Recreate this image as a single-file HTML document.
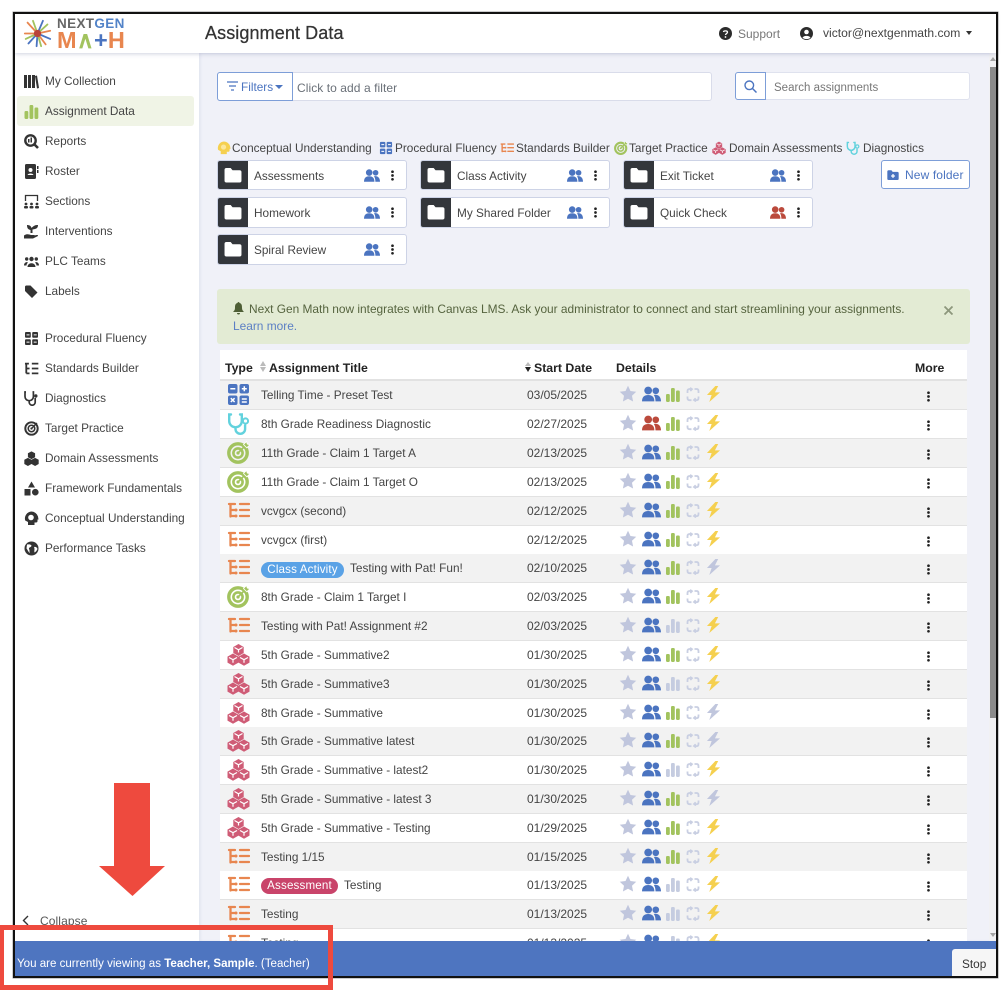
<!DOCTYPE html>
<html><head><meta charset="utf-8"><title>Assignment Data</title>
<style>
*{box-sizing:border-box}
html,body{margin:0;padding:0;width:1008px;height:992px;overflow:hidden;background:#fff;font-family:"Liberation Sans",sans-serif;color:#333}
.a{position:absolute;white-space:nowrap}
#frame{position:absolute;left:13px;top:12px;width:985px;height:966px;border:2px solid #111;border-width:2px 2.5px 2.5px 2px;z-index:20;pointer-events:none;box-shadow:0 0 0 .5px #999}
#main{position:absolute;left:199px;top:53px;width:790px;height:888px;background:#f0f1f8;overflow:hidden;box-shadow:inset 2px 0 2px #e4e6f1}
#hdr{position:absolute;left:15px;top:14px;width:981px;height:39px;background:#fff;box-shadow:0 1px 4px rgba(120,130,170,.35);z-index:2}
.n{position:absolute;left:45px;font-size:11.8px;line-height:16px;color:#444;white-space:nowrap}
.ni{position:absolute;left:24px;width:15px;height:15px;fill:#333}
.card{position:absolute;width:190px;height:31px;background:#fff;border:1px solid #cdd3e6;border-radius:3px;overflow:hidden;font-size:11.8px;color:#444}
.card b{position:absolute;left:0;top:0;width:30px;height:31px;background:#33363b}
.card span{position:absolute;left:36px;top:7px;line-height:16px;white-space:nowrap}
.card svg.f{position:absolute;left:6px;top:6px;width:18px;height:16px;fill:#fff}
.card svg.p{position:absolute;left:146px;top:8px;width:16px;height:13px;fill:#4b74c0}
.card svg.k{position:absolute;left:172px;top:9px;width:5px;height:11px;fill:#222}
.lg{position:absolute;top:140px;font-size:11.8px;line-height:16px;color:#444;white-space:nowrap}
.lgi{position:absolute;top:141px;width:14px;height:14px}
.r{position:absolute;left:220px;width:747px;height:29px;background:#fff;border-bottom:1px solid #e2e2e2;font-size:11.8px;color:#444}
.r.o{background:#f2f2f2}
.r>svg{position:absolute}
.r .t{position:absolute;left:41px;top:6px;line-height:16px;white-space:nowrap}
.r .d{position:absolute;left:307px;top:6px;line-height:16px;font-size:12px}
.ty{left:7px;top:2px;width:23px;height:23px}
.s1{left:399px;top:4px;width:18px;height:18px;fill:#c0c6dd}
.s2{left:422px;top:5px;width:19px;height:16px;fill:#4b74c0}
.s3{left:446px;top:6px;width:14px;height:15px;fill:#a2c35e}
.g3{fill:#c5cce0}
.s4{left:466px;top:6px;width:14px;height:15px;fill:none;stroke:#c9cfe2;stroke-width:1.8}
.s5{left:486px;top:5px;width:15px;height:16px;fill:#f5d04f}
.g5{fill:#c0c6dd}
.s6{left:706px;top:10px;width:5px;height:11px;fill:#222}
.pill{position:absolute;left:41px;top:8px;height:16px;border-radius:8px;color:#fff;font-size:11.6px;line-height:16px;text-align:center;letter-spacing:.15px}
.th{position:absolute;top:360px;font-size:12.3px;font-weight:bold;line-height:16px;color:#222;white-space:nowrap}
</style></head>
<body>
<svg width="0" height="0" style="position:absolute">
<defs>
<symbol id="pe" viewBox="0 0 20 16"><circle cx="6.500" cy="4.300" r="4.100"/><path d="M0 15.800C0 11 2.500 9 6.500 9s6.500 2 6.500 6.800z"/><circle cx="14.500" cy="4.600" r="3.500"/><path d="M12.500 9c4.500-1 7.500 1.800 7.500 6.800h-5.800c0-3-.5-5-1.700-6.800z"/></symbol>
<symbol id="st" viewBox="0 0 24 24"><path d="M12 1l3.300 7 7.700 1-5.700 5.300 1.500 7.700L12 18.300 5.200 22l1.500-7.700L1 9l7.700-1z"/></symbol>
<symbol id="ba" viewBox="0 0 14 15"><rect x="0" y="7" width="3.800" height="8" rx="1.200"/><rect x="5" y="1" width="3.800" height="14" rx="1.200"/><rect x="10" y="3.500" width="3.800" height="11.500" rx="1.200"/></symbol>
<symbol id="sy" viewBox="0 0 14 15"><path d="M1.500 6V4Q1.500 2 3.500 2H5.500M4 .8L6 2.200 4.300 4M8.500 2H10.500Q12.500 2 12.500 4V6M12.500 9.500V11Q12.500 13.200 10.500 13.200H8.500M10 14.400L8 13 9.700 11.200M5.500 13.200H3.500Q1.500 13.200 1.500 11V9.500"/></symbol>
<symbol id="bo" viewBox="0 0 16 17"><path d="M10 0L1 9.500h5L3.500 17 15 6.800H9.500L13 0z"/></symbol>
<symbol id="ke" viewBox="0 0 5 13"><circle cx="2.500" cy="2" r="1.600"/><circle cx="2.500" cy="6.500" r="1.600"/><circle cx="2.500" cy="11" r="1.600"/></symbol>
<symbol id="fo" viewBox="0 0 19 17"><path d="M2.500 1H7l2 2.500h7.500A2 2 0 0 1 18.500 5.500v9a2 2 0 0 1-2 2h-14a2 2 0 0 1-2-2V3a2 2 0 0 1 2-2z"/></symbol>
<symbol id="ca" viewBox="0 0 23 23"><rect x="1" y="1" width="9.500" height="9.500" rx="2" fill="#4b74c0"/><rect x="12.500" y="1" width="9.500" height="9.500" rx="2" fill="#4b74c0"/><rect x="1" y="12.500" width="9.500" height="9.500" rx="2" fill="#4b74c0"/><rect x="12.500" y="12.500" width="9.500" height="9.500" rx="2" fill="#4b74c0"/><path d="M3.300 5.700h5M14.800 5.700h5M17.300 3.200v5M3.800 15.200l3.800 3.800M7.600 15.200l-3.800 3.800M14.800 16h5M14.800 19h5" stroke="#fff" stroke-width="1.500" fill="none"/></symbol>
<symbol id="di" viewBox="0 0 23 23"><path d="M4 2.500H2.200v6.500a6.300 6.300 0 0 0 12.600 0V2.500H13" fill="none" stroke="#62d2dd" stroke-width="2.400" stroke-linecap="round"/><path d="M8.500 15.500v1.500a4.800 4.800 0 0 0 9.600 0V12.500" fill="none" stroke="#62d2dd" stroke-width="2.400"/><circle cx="18.500" cy="9" r="2.600" fill="none" stroke="#62d2dd" stroke-width="2"/></symbol>
<symbol id="ta" viewBox="0 0 23 23"><circle cx="11" cy="12" r="9.200" fill="none" stroke="#a2c35e" stroke-width="3.400"/><circle cx="11" cy="12" r="4.600" fill="none" stroke="#a2c35e" stroke-width="2.600"/><circle cx="11" cy="12" r="1.600" fill="#a2c35e"/><path d="M11 12L19 4" stroke="#a2c35e" stroke-width="1.800"/><path d="M16.500 3.500l3-3 .8 2.500 2.500.8-3 3z" fill="#a2c35e" stroke="#fff" stroke-width=".8"/></symbol>
<symbol id="sb" viewBox="0 0 23 23"><path d="M3.500 5v12.500M2 5h6M3.500 11h5.500M3.500 17h5.500M13 5h9M13 11h9M13 17h9" fill="none" stroke="#e8864f" stroke-width="2.300" stroke-linecap="round"/><circle cx="9" cy="11" r="1.500" fill="#e8864f"/><circle cx="9" cy="17" r="1.500" fill="#e8864f"/></symbol>
<symbol id="cu" viewBox="0 0 23 23"><path d="M11.500 1l5.200 3v6L11.500 13l-5.200-3V4z" fill="#cf5c76"/><path d="M6 10.500l5.500 3.100v6L6 22.700.5 19.600v-6z" fill="#cf5c76"/><path d="M17 10.500l5.500 3.100v6L17 22.700l-5.500-3.100v-6z" fill="#cf5c76"/><path d="M7.500 4.500L11.500 6.800 15.500 4.500M11.500 6.800V9.500M2 14.500L6 16.700 10 14.500M6 16.700v3M13 14.500L17 16.700 21 14.500M17 16.700v3" fill="none" stroke="#fff" stroke-width="1.200"/></symbol>
</defs>
</svg>

<div id="main"></div>

<div id="hdr"></div>
<div class="a" style="left:205px;top:22px;font-size:18px;line-height:22px;color:#333;z-index:3;-webkit-text-stroke:.25px #333;letter-spacing:.1px">Assignment Data</div>
<svg class="a" style="left:719px;top:27px;z-index:3" width="13" height="13" viewBox="0 0 13 13"><circle cx="6.500" cy="6.500" r="6.500" fill="#2b2b2b"/><path d="M4.500 5C4.700 3.500 8.500 3.500 8.500 5.300c0 1.300-2 1.200-2 2.700" fill="none" stroke="#fff" stroke-width="1.300"/><circle cx="6.500" cy="10" r=".9" fill="#fff"/></svg>
<div class="a" style="left:738px;top:26px;font-size:12px;line-height:16px;color:#777;z-index:3">Support</div>
<svg class="a" style="left:800px;top:27px;z-index:3" width="13" height="13" viewBox="0 0 13 13"><circle cx="6.500" cy="6.500" r="6.500" fill="#2b2b2b"/><circle cx="6.500" cy="5" r="2.300" fill="#fff"/><path d="M2.500 10.800c1-2.600 7-2.600 8 0-2 1.800-6 1.800-8 0z" fill="#fff"/></svg>
<div class="a" style="left:823px;top:25px;font-size:12.100px;line-height:16px;color:#444;z-index:3">victor@nextgenmath.com</div>
<div class="a" style="left:966px;top:31px;width:0;height:0;border:3.500px solid transparent;border-top:4px solid #333;border-bottom:0;z-index:3"></div>

<!-- logo -->
<svg class="a" style="left:23px;top:19px;z-index:3" width="29" height="29" viewBox="0 0 32 32" fill="none" stroke-width="2" stroke-linecap="round"><path d="M16 16L5 4M16 16L2 16" stroke="#e8864f"/><path d="M16 16L11 2M16 16L27 6" stroke="#a2c35e"/><path d="M16 16L30 13M16 16L25 28" stroke="#e8864f"/><path d="M16 16L15 30M16 16L6 27" stroke="#4b74c0"/><path d="M16 16L22 2M16 16L30 22" stroke="#4b74c0"/><path d="M16 16L3 22M16 16L20 30" stroke="#a2c35e"/><circle cx="16" cy="16" r="4" fill="#b9433a" stroke="none"/></svg>
<div class="a" style="left:57px;top:16px;font-size:13.500px;line-height:16px;font-weight:bold;letter-spacing:.35px;color:#666;z-index:3">NEXT<span style="color:#5283c8">GEN</span></div>
<div class="a" style="left:57px;top:29px;font-size:23.500px;line-height:23px;font-weight:bold;color:#e8864f;letter-spacing:.1px;z-index:3">M<span style="color:#a2c35e">∧</span><span style="color:#4b74c0">+</span>H</div>

<div class="a" style="left:17px;top:96px;width:177px;height:30px;background:#f0f4e6;border-radius:3px"></div>
<svg class="ni" style="top:74px" viewBox="0 0 15 15"><rect x="0" y="1" width="3" height="13"/><rect x="4" y="1" width="3" height="13"/><rect x="8" y="1" width="3" height="13"/><path d="M11 2l2-.5 2 12.500-2 .5z"/></svg>
<div class="n" style="top:73px">My Collection</div>
<svg class="ni" style="top:104px;fill:#a2c35e" viewBox="0 0 14 15"><use href="#ba"/></svg>
<div class="n" style="top:103px">Assignment Data</div>
<svg class="ni" style="top:134px" viewBox="0 0 15 15"><circle cx="6.500" cy="6.500" r="5.200" fill="none" stroke="#333" stroke-width="2.400"/><path d="M10 10l4 4" stroke="#333" stroke-width="2.600"/><rect x="4" y="5" width="1.500" height="3.500"/><rect x="6.500" y="3.500" width="1.500" height="5"/></svg>
<div class="n" style="top:133px">Reports</div>
<svg class="ni" style="top:164px" viewBox="0 0 15 15"><rect x="1" y="0" width="11" height="15" rx="1.500"/><rect x="13" y="2" width="1.500" height="3"/><rect x="13" y="6" width="1.500" height="3"/><circle cx="6.500" cy="6" r="2" fill="#fff"/><path d="M3.500 11c.5-2 5.500-2 6 0z" fill="#fff"/></svg>
<div class="n" style="top:163px">Roster</div>
<svg class="ni" style="top:194px" viewBox="0 0 15 15"><path d="M1.500 7V1.500h12V7" fill="none" stroke="#333" stroke-width="1.300"/><circle cx="2" cy="10" r="1.400"/><circle cx="7.500" cy="10" r="1.400"/><circle cx="13" cy="10" r="1.400"/><rect x="0" y="12" width="4" height="2.500" rx="1"/><rect x="5.500" y="12" width="4" height="2.500" rx="1"/><rect x="11" y="12" width="4" height="2.500" rx="1"/></svg>
<div class="n" style="top:193px">Sections</div>
<svg class="ni" style="top:224px" viewBox="0 0 15 15"><path d="M0 11.500c3-2 5-1 7-.5h3c1 0 .8 1.200 0 1.200H7.500l5-1.200c1.500-.3 2 .8 1 1.300L9 14.500H0zM3 1c2.500 0 4 1 4.500 3C10 1.500 11 1 14 1c0 3-1.500 4-5.500 4.500V9h-2V6C4 5.500 3 4 3 1z"/></svg>
<div class="n" style="top:223px">Interventions</div>
<svg class="ni" style="top:254px" viewBox="0 0 15 15"><circle cx="7.500" cy="5" r="2.200"/><circle cx="2.700" cy="5" r="1.700"/><circle cx="12.300" cy="5" r="1.700"/><path d="M3.500 13c0-5 8-5 8 0zM0 11.500c0-3 2.500-4 4-3-1 1-1.500 2-1.500 3zM15 11.500c0-3-2.500-4-4-3 1 1 1.500 2 1.500 3z"/></svg>
<div class="n" style="top:253px">PLC Teams</div>
<svg class="ni" style="top:284px" viewBox="0 0 15 15"><path d="M1 2.500V7l7 7 5.500-5.500-7-7H2.500A1.500 1.500 0 0 0 1 2.500z"/></svg>
<div class="n" style="top:283px">Labels</div>
<svg class="ni" style="top:331px" viewBox="0 0 15 15"><rect x="1" y="1" width="5.800" height="5.800" rx="1"/><rect x="8.200" y="1" width="5.800" height="5.800" rx="1"/><rect x="1" y="8.200" width="5.800" height="5.800" rx="1"/><rect x="8.200" y="8.200" width="5.800" height="5.800" rx="1"/><path d="M2.500 3.900h3M9.700 3.900h3M2.500 11.100h3M9.700 11.100h3" stroke="#fff"/></svg>
<div class="n" style="top:330px">Procedural Fluency</div>
<svg class="ni" style="top:361px" viewBox="0 0 23 23"><path d="M3.500 4v15M1.500 4h6M3.500 11.500h5M3.500 19h5M12 4h10M12 11.500h10M12 19h10" fill="none" stroke="#333" stroke-width="2.800"/></svg>
<div class="n" style="top:360px">Standards Builder</div>
<svg class="ni" style="top:391px" viewBox="0 0 15 15"><path d="M2 1H1v4.500a4.200 4.200 0 0 0 8.400 0V1H8.500M5.200 10v1.200a3 3 0 0 0 6 0V7" fill="none" stroke="#333" stroke-width="1.700"/><circle cx="11.800" cy="5" r="1.700"/></svg>
<div class="n" style="top:390px">Diagnostics</div>
<svg class="ni" style="top:421px" viewBox="0 0 23 23"><circle cx="11.500" cy="11.500" r="9.500" fill="none" stroke="#333" stroke-width="3"/><circle cx="11.500" cy="11.500" r="5" fill="none" stroke="#333" stroke-width="2.400"/><circle cx="11.500" cy="11.500" r="1.800"/><path d="M11.500 11.500L20 3" stroke="#333" stroke-width="2"/></svg>
<div class="n" style="top:420px">Target Practice</div>
<svg class="ni" style="top:451px;fill:#333" viewBox="0 0 23 23"><path d="M11.500 .5l5.500 3v6l-5.500 3-5.500-3v-6zM6 10.500l5.500 3v6.500l-5.500 3-5.500-3v-6.500zM17 10.500l5.500 3v6.500l-5.500 3-5.500-3v-6.500z"/></svg>
<div class="n" style="top:450px">Domain Assessments</div>
<svg class="ni" style="top:481px" viewBox="0 0 15 15"><path d="M7.500 .5L11 6.500H4z"/><rect x=".5" y="8" width="6" height="6.500"/><circle cx="11.300" cy="11.200" r="3.300"/></svg>
<div class="n" style="top:480px">Framework Fundamentals</div>
<svg class="ni" style="top:511px" viewBox="0 0 15 15"><path d="M7.500 .5A7 7 0 0 0 1.200 9.500L4 11v3h6.500v-2.500h1.500a1.500 1.500 0 0 0 1.500-1.500V8.500h1L14 5.500A7 7 0 0 0 7.500 .5z"/><circle cx="7" cy="6.500" r="2.800" fill="#fff"/></svg>
<div class="n" style="top:510px">Conceptual Understanding</div>
<svg class="ni" style="top:541px" viewBox="0 0 15 15"><circle cx="7.500" cy="7.500" r="7"/><path d="M3 3.500c2 0 3-.5 4.500 1 0 2-3 1.500-2.500 3.500 1 1.500 0 2.500 1 4-2-1-2-3-3.500-4.500zM10 6c2-.5 3 .5 3.500 2-1 2-2 3-3 3.500-.5-2 .5-3-.5-5.500z" fill="#fff"/></svg>
<div class="n" style="top:540px">Performance Tasks</div>

<!-- filter bar -->
<div class="a" style="left:217px;top:72px;width:495px;height:29px;background:#fff;border:1px solid #d9dcea;border-radius:3px"></div>
<div class="a" style="left:217px;top:72px;width:76px;height:29px;background:#fff;border:1px solid #7d9ed8;border-radius:3px 0 0 3px"></div>
<svg class="a" style="left:227px;top:81px" width="11" height="10" viewBox="0 0 11 10"><path d="M0 1h11M2 5h7M4 9h3" stroke="#4b74c0" stroke-width="1.300"/></svg>
<div class="a" style="left:241px;top:79px;font-size:11.800px;line-height:16px;color:#4b74c0">Filters</div>
<div class="a" style="left:275px;top:85px;width:0;height:0;border:4px solid transparent;border-top:4.500px solid #4b74c0;border-bottom:0"></div>
<div class="a" style="left:297px;top:80px;font-size:12px;line-height:16px;color:#6a7078;letter-spacing:.07px">Click to add a filter</div>

<div class="a" style="left:735px;top:72px;width:235px;height:28px;background:#fff;border:1px solid #dfe2ee;border-radius:3px"></div>
<div class="a" style="left:735px;top:72px;width:31px;height:28px;background:#fff;border:1px solid #7d9ed8;border-radius:3px 0 0 3px"></div>
<svg class="a" style="left:744px;top:80px" width="13" height="13" viewBox="0 0 13 13"><circle cx="5.300" cy="5.300" r="4.300" fill="none" stroke="#4b74c0" stroke-width="1.400"/><path d="M8.500 8.500l4 4" stroke="#4b74c0" stroke-width="1.500"/></svg>
<div class="a" style="left:774px;top:80px;font-size:11.500px;line-height:16px;color:#777">Search assignments</div>

<!-- legend -->
<svg class="lgi" style="left:217px" viewBox="0 0 15 15"><path d="M7.500 .5A7 7 0 0 0 1.200 9.500L4 11v3h6.500v-2.500h1.500a1.500 1.500 0 0 0 1.500-1.500V8.500h1L14 5.500A7 7 0 0 0 7.500 .5z" fill="#f5d04f"/><circle cx="7" cy="6.500" r="2.800" fill="#fbe79c"/></svg>
<div class="lg" style="left:232px">Conceptual Understanding</div>
<svg class="lgi" style="left:379px" viewBox="0 0 15 15" fill="#4b74c0"><rect x="1" y="1" width="5.800" height="5.800" rx="1"/><rect x="8.200" y="1" width="5.800" height="5.800" rx="1"/><rect x="1" y="8.200" width="5.800" height="5.800" rx="1"/><rect x="8.200" y="8.200" width="5.800" height="5.800" rx="1"/><path d="M2.500 3.900h3M9.700 3.900h3M2.500 11.100h3M9.700 11.100h3" stroke="#fff"/></svg>
<div class="lg" style="left:395px">Procedural Fluency</div>
<svg class="lgi" style="left:500px"><use href="#sb"/></svg>
<div class="lg" style="left:516px">Standards Builder</div>
<svg class="lgi" style="left:614px"><use href="#ta"/></svg>
<div class="lg" style="left:629px">Target Practice</div>
<svg class="lgi" style="left:712px"><use href="#cu"/></svg>
<div class="lg" style="left:729px">Domain Assessments</div>
<svg class="lgi" style="left:846px"><use href="#di"/></svg>
<div class="lg" style="left:863px">Diagnostics</div>

<!-- folders -->
<div class="card" style="left:217px;top:160px;height:30px"><b></b><svg class="f"><use href="#fo"/></svg><span>Assessments</span><svg class="p"><use href="#pe"/></svg><svg class="k"><use href="#ke"/></svg></div>
<div class="card" style="left:420px;top:160px;height:30px"><b></b><svg class="f"><use href="#fo"/></svg><span>Class Activity</span><svg class="p"><use href="#pe"/></svg><svg class="k"><use href="#ke"/></svg></div>
<div class="card" style="left:623px;top:160px;height:30px"><b></b><svg class="f"><use href="#fo"/></svg><span>Exit Ticket</span><svg class="p"><use href="#pe"/></svg><svg class="k"><use href="#ke"/></svg></div>
<div class="card" style="left:217px;top:197px"><b></b><svg class="f"><use href="#fo"/></svg><span>Homework</span><svg class="p"><use href="#pe"/></svg><svg class="k"><use href="#ke"/></svg></div>
<div class="card" style="left:420px;top:197px"><b></b><svg class="f"><use href="#fo"/></svg><span>My Shared Folder</span><svg class="p"><use href="#pe"/></svg><svg class="k"><use href="#ke"/></svg></div>
<div class="card" style="left:623px;top:197px"><b></b><svg class="f"><use href="#fo"/></svg><span>Quick Check</span><svg class="p" style="fill:#bb4a3c"><use href="#pe"/></svg><svg class="k"><use href="#ke"/></svg></div>
<div class="card" style="left:217px;top:234px"><b></b><svg class="f"><use href="#fo"/></svg><span>Spiral Review</span><svg class="p"><use href="#pe"/></svg><svg class="k"><use href="#ke"/></svg></div>

<div class="a" style="left:881px;top:160px;width:89px;height:29px;background:#fff;border:1px solid #7d9ed8;border-radius:3px"></div>
<svg class="a" style="left:887px;top:169px" width="12" height="12" viewBox="0 0 19 17"><path fill="#4b74c0" d="M2.500 1H7l2 2.500h7.500A2 2 0 0 1 18.500 5.500v9a2 2 0 0 1-2 2h-14a2 2 0 0 1-2-2V3a2 2 0 0 1 2-2z"/><path d="M9.500 7v6M6.500 10h6" stroke="#fff" stroke-width="2"/></svg>
<div class="a" style="left:905px;top:167px;font-size:12px;line-height:16px;color:#4b74c0;letter-spacing:.12px">New folder</div>

<!-- alert -->
<div class="a" style="left:217px;top:289px;width:753px;height:55px;background:#e3ebd4;border-radius:3px"></div>
<svg class="a" style="left:233px;top:302px" width="11" height="13" viewBox="0 0 11 13"><path fill="#4e5e35" d="M5.500 0a1 1 0 0 1 1 1C9 1.500 9 4 9 6c0 2 1 3 2 4H0c1-1 2-2 2-4 0-2 0-4.500 2.500-5a1 1 0 0 1 1-1zM4 11h3a1.500 1.500 0 0 1-3 0z"/></svg>
<div class="a" style="left:249px;top:301px;font-size:11.900px;line-height:16px;color:#55633e">Next Gen Math now integrates with Canvas LMS. Ask your administrator to connect and start streamlining your assignments.</div>
<div class="a" style="left:233px;top:318px;font-size:11.900px;line-height:16px;color:#5b7fc4">Learn more.</div>
<svg class="a" style="left:944px;top:306px" width="9" height="9" viewBox="0 0 9 9"><path d="M.5.500l8 8M8.500.500l-8 8" stroke="#8d977c" stroke-width="1.800"/></svg>

<!-- table head -->
<div class="a" style="left:220px;top:350px;width:747px;height:31px;background:#fff;border-bottom:2px solid #e2e2e2"></div>
<div class="th" style="left:225px">Type</div>
<div class="a" style="left:260px;top:361px;width:0;height:0;border:3.500px solid transparent;border-bottom:5px solid #bbb;border-top:0"></div>
<div class="a" style="left:260px;top:367px;width:0;height:0;border:3.500px solid transparent;border-top:5px solid #bbb;border-bottom:0"></div>
<div class="th" style="left:269px">Assignment Title</div>
<div class="a" style="left:525px;top:362px;width:0;height:0;border:3.500px solid transparent;border-bottom:4px solid #bbb;border-top:0"></div>
<div class="a" style="left:525px;top:367px;width:0;height:0;border:3.500px solid transparent;border-top:5px solid #222;border-bottom:0"></div>
<div class="th" style="left:534px">Start Date</div>
<div class="th" style="left:616px">Details</div>
<div class="th" style="left:915px">More</div>

<!-- rows -->
<div class="r o" style="top:381px"><svg class="ty"><use href="#ca"/></svg><div class="t">Telling Time - Preset Test</div><div class="d">03/05/2025</div><svg class="s1"><use href="#st"/></svg><svg class="s2"><use href="#pe"/></svg><svg class="s3"><use href="#ba"/></svg><svg class="s4"><use href="#sy"/></svg><svg class="s5"><use href="#bo"/></svg><svg class="s6"><use href="#ke"/></svg></div>
<div class="r" style="top:410px"><svg class="ty"><use href="#di"/></svg><div class="t">8th Grade Readiness Diagnostic</div><div class="d">02/27/2025</div><svg class="s1"><use href="#st"/></svg><svg class="s2" style="fill:#bb4a3c"><use href="#pe"/></svg><svg class="s3"><use href="#ba"/></svg><svg class="s4"><use href="#sy"/></svg><svg class="s5"><use href="#bo"/></svg><svg class="s6"><use href="#ke"/></svg></div>
<div class="r o" style="top:439px"><svg class="ty"><use href="#ta"/></svg><div class="t">11th Grade - Claim 1 Target A</div><div class="d">02/13/2025</div><svg class="s1"><use href="#st"/></svg><svg class="s2"><use href="#pe"/></svg><svg class="s3"><use href="#ba"/></svg><svg class="s4"><use href="#sy"/></svg><svg class="s5"><use href="#bo"/></svg><svg class="s6"><use href="#ke"/></svg></div>
<div class="r" style="top:468px"><svg class="ty"><use href="#ta"/></svg><div class="t">11th Grade - Claim 1 Target O</div><div class="d">02/13/2025</div><svg class="s1"><use href="#st"/></svg><svg class="s2"><use href="#pe"/></svg><svg class="s3"><use href="#ba"/></svg><svg class="s4"><use href="#sy"/></svg><svg class="s5"><use href="#bo"/></svg><svg class="s6"><use href="#ke"/></svg></div>
<div class="r o" style="top:497px"><svg class="ty"><use href="#sb"/></svg><div class="t">vcvgcx (second)</div><div class="d">02/12/2025</div><svg class="s1"><use href="#st"/></svg><svg class="s2"><use href="#pe"/></svg><svg class="s3"><use href="#ba"/></svg><svg class="s4"><use href="#sy"/></svg><svg class="s5"><use href="#bo"/></svg><svg class="s6"><use href="#ke"/></svg></div>
<div class="r" style="top:526px"><svg class="ty"><use href="#sb"/></svg><div class="t">vcvgcx (first)</div><div class="d">02/12/2025</div><svg class="s1"><use href="#st"/></svg><svg class="s2"><use href="#pe"/></svg><svg class="s3"><use href="#ba"/></svg><svg class="s4"><use href="#sy"/></svg><svg class="s5"><use href="#bo"/></svg><svg class="s6"><use href="#ke"/></svg></div>
<div class="r o" style="top:554px"><svg class="ty"><use href="#sb"/></svg><div class="pill" style="width:83px;background:#5aa2e6">Class Activity</div><div class="t" style="left:130px">Testing with Pat! Fun!</div><div class="d">02/10/2025</div><svg class="s1"><use href="#st"/></svg><svg class="s2"><use href="#pe"/></svg><svg class="s3"><use href="#ba"/></svg><svg class="s4"><use href="#sy"/></svg><svg class="s5 g5"><use href="#bo"/></svg><svg class="s6"><use href="#ke"/></svg></div>
<div class="r" style="top:583px"><svg class="ty"><use href="#ta"/></svg><div class="t">8th Grade - Claim 1 Target I</div><div class="d">02/03/2025</div><svg class="s1"><use href="#st"/></svg><svg class="s2"><use href="#pe"/></svg><svg class="s3"><use href="#ba"/></svg><svg class="s4"><use href="#sy"/></svg><svg class="s5"><use href="#bo"/></svg><svg class="s6"><use href="#ke"/></svg></div>
<div class="r o" style="top:612px"><svg class="ty"><use href="#sb"/></svg><div class="t">Testing with Pat! Assignment #2</div><div class="d">02/03/2025</div><svg class="s1"><use href="#st"/></svg><svg class="s2"><use href="#pe"/></svg><svg class="s3 g3"><use href="#ba"/></svg><svg class="s4"><use href="#sy"/></svg><svg class="s5"><use href="#bo"/></svg><svg class="s6"><use href="#ke"/></svg></div>
<div class="r" style="top:641px"><svg class="ty"><use href="#cu"/></svg><div class="t">5th Grade - Summative2</div><div class="d">01/30/2025</div><svg class="s1"><use href="#st"/></svg><svg class="s2"><use href="#pe"/></svg><svg class="s3"><use href="#ba"/></svg><svg class="s4"><use href="#sy"/></svg><svg class="s5"><use href="#bo"/></svg><svg class="s6"><use href="#ke"/></svg></div>
<div class="r o" style="top:670px"><svg class="ty"><use href="#cu"/></svg><div class="t">5th Grade - Summative3</div><div class="d">01/30/2025</div><svg class="s1"><use href="#st"/></svg><svg class="s2"><use href="#pe"/></svg><svg class="s3 g3"><use href="#ba"/></svg><svg class="s4"><use href="#sy"/></svg><svg class="s5"><use href="#bo"/></svg><svg class="s6"><use href="#ke"/></svg></div>
<div class="r" style="top:699px"><svg class="ty"><use href="#cu"/></svg><div class="t">8th Grade - Summative</div><div class="d">01/30/2025</div><svg class="s1"><use href="#st"/></svg><svg class="s2"><use href="#pe"/></svg><svg class="s3"><use href="#ba"/></svg><svg class="s4"><use href="#sy"/></svg><svg class="s5 g5"><use href="#bo"/></svg><svg class="s6"><use href="#ke"/></svg></div>
<div class="r o" style="top:727px"><svg class="ty"><use href="#cu"/></svg><div class="t">5th Grade - Summative latest</div><div class="d">01/30/2025</div><svg class="s1"><use href="#st"/></svg><svg class="s2"><use href="#pe"/></svg><svg class="s3"><use href="#ba"/></svg><svg class="s4"><use href="#sy"/></svg><svg class="s5 g5"><use href="#bo"/></svg><svg class="s6"><use href="#ke"/></svg></div>
<div class="r" style="top:756px"><svg class="ty"><use href="#cu"/></svg><div class="t">5th Grade - Summative - latest2</div><div class="d">01/30/2025</div><svg class="s1"><use href="#st"/></svg><svg class="s2"><use href="#pe"/></svg><svg class="s3 g3"><use href="#ba"/></svg><svg class="s4"><use href="#sy"/></svg><svg class="s5"><use href="#bo"/></svg><svg class="s6"><use href="#ke"/></svg></div>
<div class="r o" style="top:785px"><svg class="ty"><use href="#cu"/></svg><div class="t">5th Grade - Summative - latest 3</div><div class="d">01/30/2025</div><svg class="s1"><use href="#st"/></svg><svg class="s2"><use href="#pe"/></svg><svg class="s3"><use href="#ba"/></svg><svg class="s4"><use href="#sy"/></svg><svg class="s5 g5"><use href="#bo"/></svg><svg class="s6"><use href="#ke"/></svg></div>
<div class="r" style="top:814px"><svg class="ty"><use href="#cu"/></svg><div class="t">5th Grade - Summative - Testing</div><div class="d">01/29/2025</div><svg class="s1"><use href="#st"/></svg><svg class="s2"><use href="#pe"/></svg><svg class="s3"><use href="#ba"/></svg><svg class="s4"><use href="#sy"/></svg><svg class="s5"><use href="#bo"/></svg><svg class="s6"><use href="#ke"/></svg></div>
<div class="r o" style="top:843px"><svg class="ty"><use href="#sb"/></svg><div class="t">Testing 1/15</div><div class="d">01/15/2025</div><svg class="s1"><use href="#st"/></svg><svg class="s2"><use href="#pe"/></svg><svg class="s3"><use href="#ba"/></svg><svg class="s4"><use href="#sy"/></svg><svg class="s5"><use href="#bo"/></svg><svg class="s6"><use href="#ke"/></svg></div>
<div class="r" style="top:871px"><svg class="ty"><use href="#sb"/></svg><div class="pill" style="width:77px;top:7px;background:#c9446a">Assessment</div><div class="t" style="left:124px">Testing</div><div class="d">01/13/2025</div><svg class="s1"><use href="#st"/></svg><svg class="s2"><use href="#pe"/></svg><svg class="s3 g3"><use href="#ba"/></svg><svg class="s4"><use href="#sy"/></svg><svg class="s5"><use href="#bo"/></svg><svg class="s6"><use href="#ke"/></svg></div>
<div class="r o" style="top:900px"><svg class="ty"><use href="#sb"/></svg><div class="t">Testing</div><div class="d">01/13/2025</div><svg class="s1"><use href="#st"/></svg><svg class="s2"><use href="#pe"/></svg><svg class="s3 g3"><use href="#ba"/></svg><svg class="s4"><use href="#sy"/></svg><svg class="s5"><use href="#bo"/></svg><svg class="s6"><use href="#ke"/></svg></div>
<div class="r" style="top:929px"><svg class="ty"><use href="#sb"/></svg><div class="t">Testing</div><div class="d">01/13/2025</div><svg class="s1"><use href="#st"/></svg><svg class="s2"><use href="#pe"/></svg><svg class="s3 g3"><use href="#ba"/></svg><svg class="s4"><use href="#sy"/></svg><svg class="s5"><use href="#bo"/></svg><svg class="s6"><use href="#ke"/></svg></div>

<!-- scrollbar -->
<div class="a" style="left:989px;top:53px;width:7px;height:888px;background:#f1f1f3"></div>
<div class="a" style="left:990px;top:67px;width:6px;height:651px;background:#8b8b8b"></div>
<div class="a" style="left:990px;top:57px;width:0;height:0;border:3px solid transparent;border-bottom:4px solid #a3a3a3;border-top:0"></div>
<div class="a" style="left:990px;top:933px;width:0;height:0;border:3px solid transparent;border-top:4px solid #a3a3a3;border-bottom:0"></div>

<!-- collapse -->
<svg class="a" style="left:22px;top:915px" width="7" height="11" viewBox="0 0 7 11"><path d="M6 1L1.500 5.500 6 10" fill="none" stroke="#333" stroke-width="1.400"/></svg>
<div class="a" style="left:40px;top:913px;font-size:12px;line-height:16px;color:#555;letter-spacing:.1px">Collapse</div>

<!-- blue bar -->
<div class="a" style="left:15px;top:941px;width:981px;height:35px;background:#4e75c0;z-index:5"></div>
<div class="a" style="left:17px;top:956px;font-size:11.550px;line-height:16px;color:#fff;z-index:6">You are currently viewing as <b>Teacher, Sample</b>. (Teacher)</div>
<div class="a" style="left:952px;top:949px;width:44px;height:27px;background:#f6f6f6;border-radius:3px 0 0 0;z-index:6;font-size:11.800px;line-height:16px;color:#333;padding:7px 0 0 10px">Stop</div>

<div id="frame"></div>

<!-- annotations -->
<div class="a" style="left:0;top:925px;width:333px;height:65px;border:5px solid #ee4a3e;border-left-width:4px;z-index:30"></div>
<svg class="a" style="left:99px;top:783px;z-index:30" width="67" height="114" viewBox="0 0 67 114"><path fill="#ee4a3e" d="M15 0H51V83H66L33.500 113 0 83H15z"/></svg>
</body></html>
